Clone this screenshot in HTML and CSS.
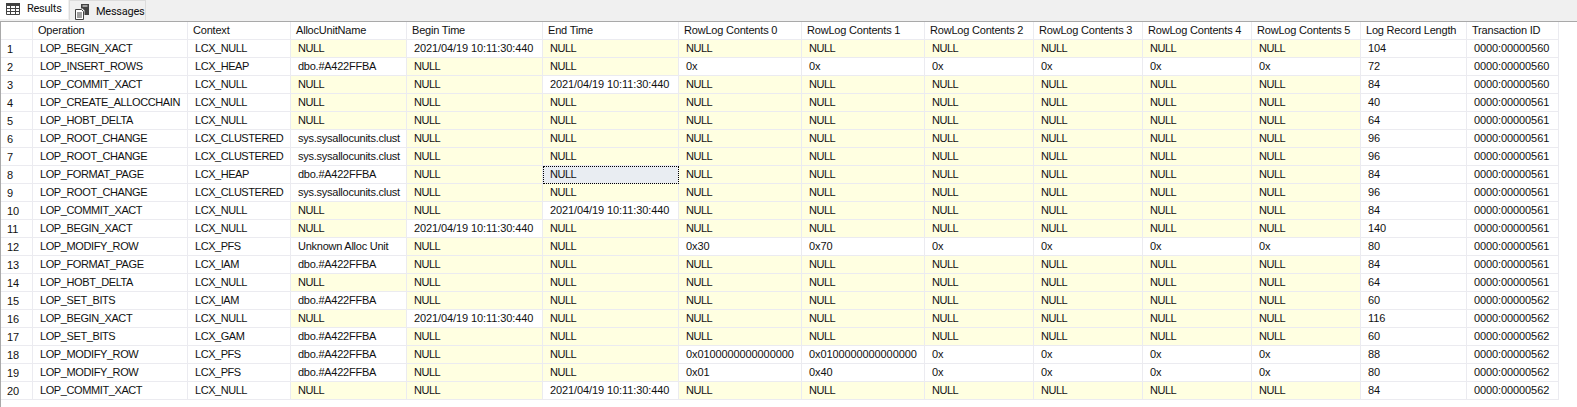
FILE: index.html
```html
<!DOCTYPE html>
<html lang="en">
<head>
<meta charset="utf-8">
<title>Results</title>
<link rel="stylesheet" href="styles.css">
</head>
<body>
<div class="tabs">
  <div class="tab active">
    <svg class="ico" width="14" height="12" viewBox="0 0 14 12"><path d="M.5.5h13v11H.5z" fill="#fff" stroke="#424242"/><path d="M0 0h14v3H0zM0 5h14v1H0zM0 8h14v1H0zM4 0h1v12H4zM9 0h1v12H9z" fill="#424242"/></svg>
    <span>Results</span>
  </div>
  <div class="tab">
    <svg class="ico" width="15" height="16" viewBox="0 0 15 16"><path d="M.5 5.5h6l2 2v8h-8z" fill="#fff" stroke="#424242"/><path d="M2 9h5M2 11h5M2 13h5" stroke="#424242"/><path d="M6 0h8v11H9.500V6.500L7.500 4.500H6z" fill="#424242"/><path d="M7.500 2h5" stroke="#fff"/></svg>
    <span>Messages</span>
  </div>
</div>
<div class="pane">
<table class="grid">
<colgroup><col class="c0"><col class="c1"><col class="c2"><col class="c3"><col class="c4"><col class="c5"><col class="c6"><col class="c7"><col class="c8"><col class="c9"><col class="c10"><col class="c11"><col class="c12"><col class="c13"></colgroup>
<thead><tr><th></th><th>Operation</th><th>Context</th><th>AllocUnitName</th><th>Begin Time</th><th>End Time</th><th>RowLog Contents 0</th><th>RowLog Contents 1</th><th>RowLog Contents 2</th><th>RowLog Contents 3</th><th>RowLog Contents 4</th><th>RowLog Contents 5</th><th>Log Record Length</th><th>Transaction ID</th></tr></thead>
<tbody>
<tr><th>1</th><td>LOP_BEGIN_XACT</td><td>LCX_NULL</td><td class="n">NULL</td><td>2021/04/19 10:11:30:440</td><td class="n">NULL</td><td class="n">NULL</td><td class="n">NULL</td><td class="n">NULL</td><td class="n">NULL</td><td class="n">NULL</td><td class="n">NULL</td><td>104</td><td>0000:00000560</td></tr>
<tr><th>2</th><td>LOP_INSERT_ROWS</td><td>LCX_HEAP</td><td>dbo.#A422FFBA</td><td class="n">NULL</td><td class="n">NULL</td><td>0x</td><td>0x</td><td>0x</td><td>0x</td><td>0x</td><td>0x</td><td>72</td><td>0000:00000560</td></tr>
<tr><th>3</th><td>LOP_COMMIT_XACT</td><td>LCX_NULL</td><td class="n">NULL</td><td class="n">NULL</td><td>2021/04/19 10:11:30:440</td><td class="n">NULL</td><td class="n">NULL</td><td class="n">NULL</td><td class="n">NULL</td><td class="n">NULL</td><td class="n">NULL</td><td>84</td><td>0000:00000560</td></tr>
<tr><th>4</th><td>LOP_CREATE_ALLOCCHAIN</td><td>LCX_NULL</td><td class="n">NULL</td><td class="n">NULL</td><td class="n">NULL</td><td class="n">NULL</td><td class="n">NULL</td><td class="n">NULL</td><td class="n">NULL</td><td class="n">NULL</td><td class="n">NULL</td><td>40</td><td>0000:00000561</td></tr>
<tr><th>5</th><td>LOP_HOBT_DELTA</td><td>LCX_NULL</td><td class="n">NULL</td><td class="n">NULL</td><td class="n">NULL</td><td class="n">NULL</td><td class="n">NULL</td><td class="n">NULL</td><td class="n">NULL</td><td class="n">NULL</td><td class="n">NULL</td><td>64</td><td>0000:00000561</td></tr>
<tr><th>6</th><td>LOP_ROOT_CHANGE</td><td>LCX_CLUSTERED</td><td>sys.sysallocunits.clust</td><td class="n">NULL</td><td class="n">NULL</td><td class="n">NULL</td><td class="n">NULL</td><td class="n">NULL</td><td class="n">NULL</td><td class="n">NULL</td><td class="n">NULL</td><td>96</td><td>0000:00000561</td></tr>
<tr><th>7</th><td>LOP_ROOT_CHANGE</td><td>LCX_CLUSTERED</td><td>sys.sysallocunits.clust</td><td class="n">NULL</td><td class="n">NULL</td><td class="n">NULL</td><td class="n">NULL</td><td class="n">NULL</td><td class="n">NULL</td><td class="n">NULL</td><td class="n">NULL</td><td>96</td><td>0000:00000561</td></tr>
<tr><th>8</th><td>LOP_FORMAT_PAGE</td><td>LCX_HEAP</td><td>dbo.#A422FFBA</td><td class="n">NULL</td><td class="sel">NULL</td><td class="n">NULL</td><td class="n">NULL</td><td class="n">NULL</td><td class="n">NULL</td><td class="n">NULL</td><td class="n">NULL</td><td>84</td><td>0000:00000561</td></tr>
<tr><th>9</th><td>LOP_ROOT_CHANGE</td><td>LCX_CLUSTERED</td><td>sys.sysallocunits.clust</td><td class="n">NULL</td><td class="n">NULL</td><td class="n">NULL</td><td class="n">NULL</td><td class="n">NULL</td><td class="n">NULL</td><td class="n">NULL</td><td class="n">NULL</td><td>96</td><td>0000:00000561</td></tr>
<tr><th>10</th><td>LOP_COMMIT_XACT</td><td>LCX_NULL</td><td class="n">NULL</td><td class="n">NULL</td><td>2021/04/19 10:11:30:440</td><td class="n">NULL</td><td class="n">NULL</td><td class="n">NULL</td><td class="n">NULL</td><td class="n">NULL</td><td class="n">NULL</td><td>84</td><td>0000:00000561</td></tr>
<tr><th>11</th><td>LOP_BEGIN_XACT</td><td>LCX_NULL</td><td class="n">NULL</td><td>2021/04/19 10:11:30:440</td><td class="n">NULL</td><td class="n">NULL</td><td class="n">NULL</td><td class="n">NULL</td><td class="n">NULL</td><td class="n">NULL</td><td class="n">NULL</td><td>140</td><td>0000:00000561</td></tr>
<tr><th>12</th><td>LOP_MODIFY_ROW</td><td>LCX_PFS</td><td>Unknown Alloc Unit</td><td class="n">NULL</td><td class="n">NULL</td><td>0x30</td><td>0x70</td><td>0x</td><td>0x</td><td>0x</td><td>0x</td><td>80</td><td>0000:00000561</td></tr>
<tr><th>13</th><td>LOP_FORMAT_PAGE</td><td>LCX_IAM</td><td>dbo.#A422FFBA</td><td class="n">NULL</td><td class="n">NULL</td><td class="n">NULL</td><td class="n">NULL</td><td class="n">NULL</td><td class="n">NULL</td><td class="n">NULL</td><td class="n">NULL</td><td>84</td><td>0000:00000561</td></tr>
<tr><th>14</th><td>LOP_HOBT_DELTA</td><td>LCX_NULL</td><td class="n">NULL</td><td class="n">NULL</td><td class="n">NULL</td><td class="n">NULL</td><td class="n">NULL</td><td class="n">NULL</td><td class="n">NULL</td><td class="n">NULL</td><td class="n">NULL</td><td>64</td><td>0000:00000561</td></tr>
<tr><th>15</th><td>LOP_SET_BITS</td><td>LCX_IAM</td><td>dbo.#A422FFBA</td><td class="n">NULL</td><td class="n">NULL</td><td class="n">NULL</td><td class="n">NULL</td><td class="n">NULL</td><td class="n">NULL</td><td class="n">NULL</td><td class="n">NULL</td><td>60</td><td>0000:00000562</td></tr>
<tr><th>16</th><td>LOP_BEGIN_XACT</td><td>LCX_NULL</td><td class="n">NULL</td><td>2021/04/19 10:11:30:440</td><td class="n">NULL</td><td class="n">NULL</td><td class="n">NULL</td><td class="n">NULL</td><td class="n">NULL</td><td class="n">NULL</td><td class="n">NULL</td><td>116</td><td>0000:00000562</td></tr>
<tr><th>17</th><td>LOP_SET_BITS</td><td>LCX_GAM</td><td>dbo.#A422FFBA</td><td class="n">NULL</td><td class="n">NULL</td><td class="n">NULL</td><td class="n">NULL</td><td class="n">NULL</td><td class="n">NULL</td><td class="n">NULL</td><td class="n">NULL</td><td>60</td><td>0000:00000562</td></tr>
<tr><th>18</th><td>LOP_MODIFY_ROW</td><td>LCX_PFS</td><td>dbo.#A422FFBA</td><td class="n">NULL</td><td class="n">NULL</td><td>0x0100000000000000</td><td>0x0100000000000000</td><td>0x</td><td>0x</td><td>0x</td><td>0x</td><td>88</td><td>0000:00000562</td></tr>
<tr><th>19</th><td>LOP_MODIFY_ROW</td><td>LCX_PFS</td><td>dbo.#A422FFBA</td><td class="n">NULL</td><td class="n">NULL</td><td>0x01</td><td>0x40</td><td>0x</td><td>0x</td><td>0x</td><td>0x</td><td>80</td><td>0000:00000562</td></tr>
<tr><th>20</th><td>LOP_COMMIT_XACT</td><td>LCX_NULL</td><td class="n">NULL</td><td class="n">NULL</td><td>2021/04/19 10:11:30:440</td><td class="n">NULL</td><td class="n">NULL</td><td class="n">NULL</td><td class="n">NULL</td><td class="n">NULL</td><td class="n">NULL</td><td>84</td><td>0000:00000562</td></tr>
</tbody>
</table>
</div>
</body>
</html>
```
FILE: styles.css
```css
* { box-sizing: border-box; }
html, body { margin: 0; height: 100%; }
body {
  background: #fff;
  font-family: "Liberation Sans", Arial, sans-serif;
  font-size: 11px;
  color: #111;
  overflow: hidden;
  display: flex;
  flex-direction: column;
}
.tabs {
  height: 22px;
  flex: none;
  background: #f0f0f0;
  border-bottom: 1px solid #a9a9a9;
  display: flex;
  align-items: flex-start;
}
.tab {
  display: flex;
  align-items: center;
  height: 20px;
  width: 77px;
  margin-left: 1px;
  padding: 2px 0 0 5px;
  gap: 6px;
  font-family: Roboto, "Liberation Sans", sans-serif;
  font-size: 11px;
  letter-spacing: -0.25px;
  background: #f0f0f0;
  border: 1px solid #dcdcdc;
  border-bottom: 0;
}
.ico { flex: none; }
.tab.active {
  width: 68px;
  height: 19px;
  margin-left: 0;
  padding: 0 0 2px 6px;
  gap: 7px;
  background: #fff;
  border: 0;
}
.pane { flex: 1; border-left: 1px solid #a9a9a9; }
.grid {
  border-collapse: separate;
  border-spacing: 0;
  table-layout: fixed;
  width: 1558px;
}
.c0 { width: 32px; }
.c1 { width: 155px; }
.c2 { width: 103px; }
.c3 { width: 116px; }
.c4 { width: 136px; }
.c5 { width: 136px; }
.c6 { width: 123px; }
.c7 { width: 123px; }
.c8 { width: 109px; }
.c9 { width: 109px; }
.c10 { width: 109px; }
.c11 { width: 109px; }
.c12 { width: 106px; }
.c13 { width: 92px; }
th, td {
  height: 18px;
  padding: 0 0 1px 7px;
  border: 0 solid #ebebf0;
  border-width: 0 1px 1px 0;
  font-weight: 400;
  text-align: left;
  white-space: nowrap;
  overflow: hidden;
  line-height: 16px;
  letter-spacing: -0.1px;
}
thead th { padding-left: 5px; letter-spacing: -0.2px; }
tbody th { padding: 1px 0 0 6px; }
.grid td:nth-child(2) { letter-spacing: -0.4px; }
.grid td:nth-child(3) { letter-spacing: -0.45px; }
.grid td:nth-child(4) { letter-spacing: -0.25px; }
.grid td.n, .grid td.sel { letter-spacing: -0.5px; }
.n { background: #ffffe1; }
.sel { background: #e9edf2; outline: 1px dotted #000; outline-offset: -1px; }
```
